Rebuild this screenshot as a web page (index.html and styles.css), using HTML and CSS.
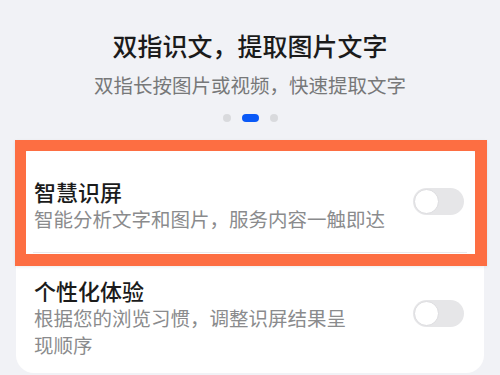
FILE: index.html
```html
<!DOCTYPE html>
<html lang="zh-CN">
<head>
<meta charset="utf-8">
<link rel="stylesheet" href="styles.css">
</head>
<body>
<div class="page">
  <header class="intro">
    <h1 class="intro-title">双指识文，提取图片文字</h1>
    <p class="intro-sub">双指长按图片或视频，快速提取文字</p>
    <div class="dots">
      <span class="dot"></span>
      <span class="dot active"></span>
      <span class="dot"></span>
    </div>
  </header>
  <section class="card">
    <div class="row first">
      <div class="text">
        <div class="row-title">智慧识屏</div>
        <div class="row-sub">智能分析文字和图片，服务内容一触即达</div>
      </div>
      <div class="toggle"><span class="knob"></span></div>
    </div>
    <div class="divider"></div>
    <div class="row second">
      <div class="text narrow">
        <div class="row-title">个性化体验</div>
        <div class="row-sub">根据您的浏览习惯，调整识屏结果呈现顺序</div>
      </div>
      <div class="toggle"><span class="knob"></span></div>
    </div>
    <div class="highlight"></div>
  </section>
</div>
</body>
</html>
```
FILE: styles.css
```css
* { box-sizing: border-box; }
html, body {
  margin: 0;
  padding: 0;
  background: #f1f2f6;
  width: 500px;
  height: 375px;
  overflow: hidden;
  font-family: "Noto Sans CJK SC", "Noto Sans", sans-serif;
}
.page {
  display: flex;
  flex-direction: column;
}
.intro {
  padding-top: 28px;
  display: flex;
  flex-direction: column;
  align-items: center;
}
.intro-title {
  margin: 0;
  font-size: 25px;
  line-height: 34px;
  font-weight: 500;
  color: #1b1b1b;
}
.intro-sub {
  margin: 9px 0 0;
  font-size: 19.5px;
  line-height: 28px;
  color: #777879;
}
.dots {
  margin-top: 15px;
  display: flex;
  gap: 11px;
  align-items: center;
}
.dot {
  width: 8px;
  height: 8px;
  border-radius: 50%;
  background: #d9dadd;
}
.dot.active {
  width: 17px;
  border-radius: 4px;
  background: #0a59f7;
}
.card {
  position: relative;
  margin: 28px 16px 0;
  background: #ffffff;
  border-radius: 18px;
  height: 223px;
}
.row {
  display: flex;
  align-items: center;
  justify-content: space-between;
  padding: 0 20px 0 18px;
}
.row.first .text { padding: 28px 0 20px; }
.row.second .text { padding: 24px 0 16px; }
.text.narrow { max-width: 320px; }
.row-title {
  font-size: 22px;
  line-height: 27px;
  font-weight: 500;
  color: #1b1b1b;
}
.row-sub {
  font-size: 19.5px;
  line-height: 27px;
  color: #8a8b8d;
}
.divider {
  height: 1px;
  margin: 0 17px;
  background: #e9e9ec;
}
.toggle {
  width: 51px;
  height: 27px;
  border-radius: 14px;
  background: #e6e6e8;
  display: flex;
  align-items: center;
  padding: 0 1px;
  flex-shrink: 0;
}
.knob {
  width: 25px;
  height: 25px;
  border-radius: 50%;
  background: #ffffff;
  border: 1px solid #dcdcdf;
}
.highlight {
  position: absolute;
  left: -1px;
  top: -10px;
  width: 472px;
  height: 126px;
  border: 11px solid #fd6e42;
  border-right-width: 12px;
  border-bottom-width: 12px;
  box-shadow: 0 1px 3px rgba(0,0,0,0.08);
}
```
